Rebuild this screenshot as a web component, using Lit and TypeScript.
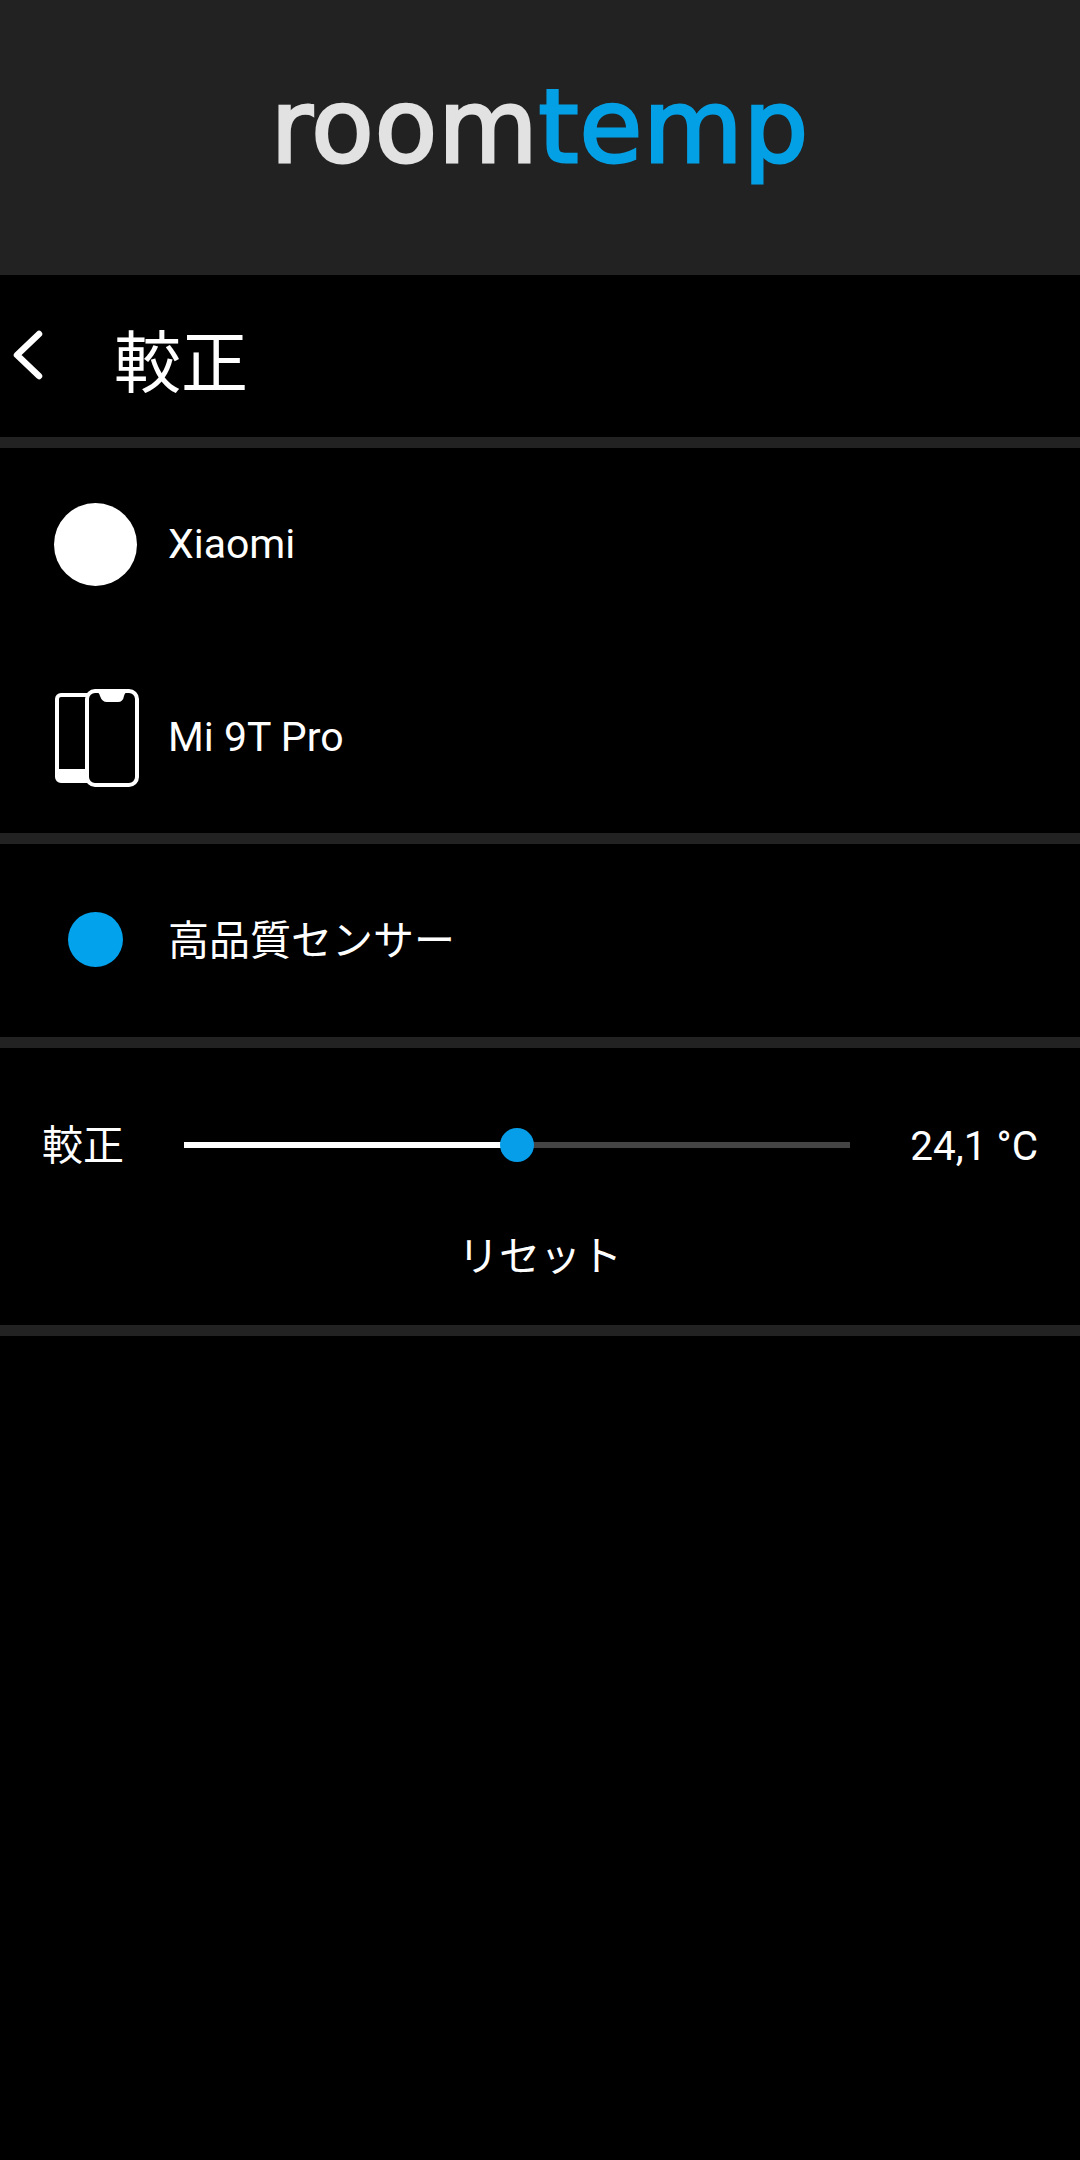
import { LitElement, html, css } from "lit";
import { customElement } from "lit/decorators.js";

@customElement("app-root")
export class AppRoot extends LitElement {
  static styles = css`
    :host { display: block; width: 1080px; height: 2160px; background: #000; color: #fff;
      font-family: Roboto, "Noto Sans CJK JP", sans-serif; overflow: hidden; }
    .brand { height: 275px; background: #222; display: flex; align-items: center; justify-content: center; }
    .logo { font-family: "DejaVu Sans", sans-serif; font-size: 102px; font-weight: 400; letter-spacing: 1px; line-height: 1; padding-bottom: 21px; filter: blur(0.6px); -webkit-text-stroke: 3px currentColor; }
    .logo .a { color: #e2e2e2; }
    .logo .b { color: #04a0e6; }
    .title { height: 162px; display: flex; align-items: center; }
    .back { width: 114px; height: 100%; flex: none; display: flex; align-items: center; padding-left: 12px; box-sizing: border-box; padding-bottom: 2px; }
    .title h1 { margin: 0; font-size: 67px; font-weight: 400; line-height: 1; padding-top: 17px; }
    .sep { height: 11px; background: #222; }
    .row { display: flex; align-items: center; font-size: 41px; }
    .icon { width: 84px; margin: 0 31px 0 53px; flex: none; display: flex; justify-content: center; }
    .dot { border-radius: 50%; }
    .white { width: 83px; height: 83px; background: #fff; }
    .blue { width: 55px; height: 55px; background: #03a2ed; margin-bottom: 2px; }
    .phone { flex: none; margin: 3px 0 0 4px; }
    .r1 { height: 192px; }
    .r2 { height: 193px; }
    .r3 { height: 193px; }
    .cjk { padding-bottom: 8px; }
    .cal { height: 277px; display: flex; flex-direction: column; font-size: 41px; }
    .slider { display: flex; align-items: center; height: 194px; padding: 0 42px; }
    .lab { width: 142px; flex: none; padding-bottom: 6px; }
    .track { width: 666px; height: 6px; background: #444; position: relative; flex: none; }
    .fill { height: 100%; background: #fff; }
    .thumb { position: absolute; width: 34px; height: 34px; border-radius: 50%; background: #069ee9; top: -14px; transform: translateX(-50%); }
    .val { flex: 1; text-align: right; white-space: nowrap; padding-top: 2px; font-size: 40.5px; }
    .reset { text-align: center; line-height: 1; margin-top: -5px; }
  `;

  render() {
    const pct = 50;
    return html`
      <div class="brand"><div class="logo"><span class="a">room</span><span class="b">temp</span></div></div>
      <div class="title">
        <div class="back">
          <svg width="32" height="52" viewBox="0 0 32 52"><path d="M27 5 L5 26 L27 47" fill="none" stroke="#fff" stroke-width="6.5" stroke-linecap="round" stroke-linejoin="round"/></svg>
        </div>
        <h1>較正</h1>
      </div>
      <div class="sep"></div>
      <div class="row r1"><div class="icon"><div class="dot white"></div></div><span>Xiaomi</span></div>
      <div class="row r2">
        <div class="icon">
          <svg class="phone" width="84" height="98" viewBox="0 0 84 98">
            <path d="M32 4 H6 a6 6 0 0 0 -6 6 V88 a6 6 0 0 0 6 6 H32 Z M32 8 H6 a2 2 0 0 0 -2 2 V80 H32 Z" fill="#fff" fill-rule="evenodd"/>
            <rect x="32" y="2" width="50" height="94" rx="8" fill="#000" stroke="#fff" stroke-width="4"/>
            <path d="M41 3 Q44 3 45 7 Q47 13 52 13 H63 Q68 13 69 7 Q70 3 73 3 Z" fill="#fff"/>
          </svg>
        </div>
        <span>Mi 9T Pro</span>
      </div>
      <div class="sep"></div>
      <div class="row r3"><div class="icon"><div class="dot blue"></div></div><span class="cjk">高品質センサー</span></div>
      <div class="sep"></div>
      <div class="cal">
        <div class="slider">
          <span class="lab">較正</span>
          <div class="track"><div class="fill" style="width:${pct}%"></div><div class="thumb" style="left:${pct}%"></div></div>
          <span class="val">24,1 °C</span>
        </div>
        <div class="reset">リセット</div>
      </div>
      <div class="sep"></div>
    `;
  }
}
